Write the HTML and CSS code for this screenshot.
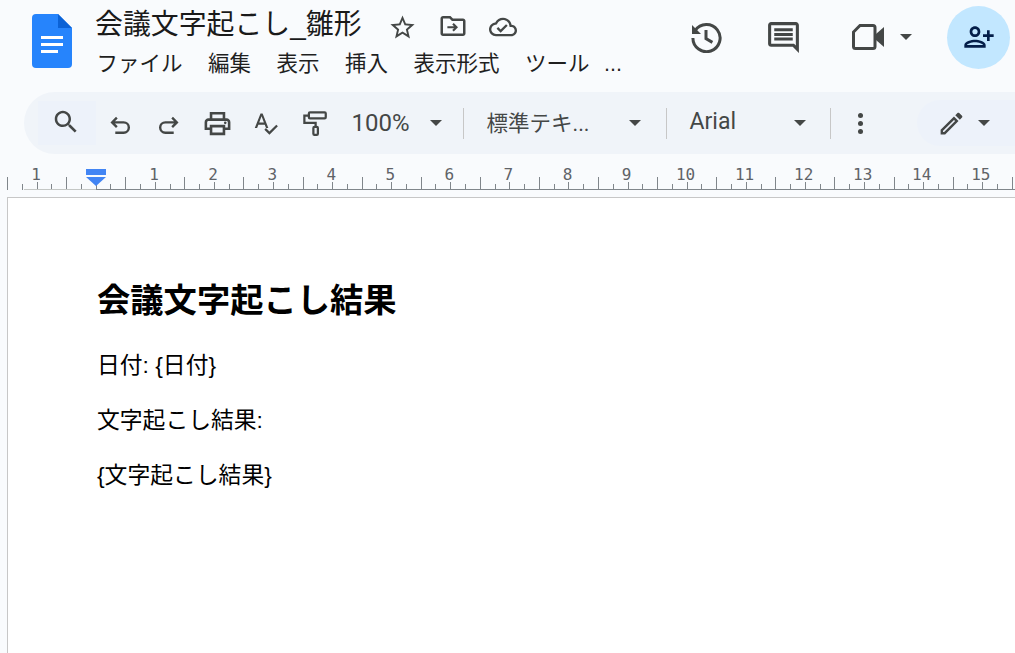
FILE: index.html
```html
<!DOCTYPE html>
<html lang="ja">
<head>
  <meta charset="UTF-8" />
  <title>会議文字起こし_雛形</title>
  <link rel="stylesheet" href="styles.css">
</head>
<body>
  <header class="top-bar">
    <svg class="doc-logo" viewBox="0 0 40 54" width="40" height="54">
      <path d="M4 0H26L40 14V50a4 4 0 0 1-4 4H4a4 4 0 0 1-4-4V4a4 4 0 0 1 4-4z" fill="#2684fc"/>
      <path d="M26 0L40 14H26z" fill="#0b62d6"/>
      <path d="M9 22h22v3H9zM9 29h22v3H9zM9 36h17v3H9z" fill="#fff"/>
    </svg>
    <div class="title-block">
      <div class="title-row">
        <span class="doc-title">会議文字起こし_雛形</span>
        <svg class="star-icon" viewBox="0 0 24 24" width="29" height="29"><path d="M22 9.24l-7.19-.62L12 2 9.19 8.63 2 9.24l5.46 4.73L5.82 21 12 17.27 18.18 21l-1.63-7.03L22 9.24zM12 15.4l-3.76 2.27 1-4.28-3.32-2.88 4.38-.38L12 6.1l1.71 4.04 4.38.38-3.32 2.88 1 4.28L12 15.4z"/></svg>
        <svg class="move-icon" viewBox="0 0 24 24" width="30" height="30"><path d="M20 6h-8l-2-2H4c-1.1 0-2 .9-2 2v12c0 1.1.9 2 2 2h16c1.1 0 2-.9 2-2V8c0-1.1-.9-2-2-2zm0 12H4V6h5.17l2 2H20v10z"/><path d="M12.6 9.6l-1.2 1.2 1.4 1.4H7.5v1.6h5.3l-1.4 1.4 1.2 1.2 3.4-3.4z"/></svg>
        <svg class="cloud-icon" viewBox="0 0 24 24" width="28" height="28"><path d="M19.35 10.04C18.67 6.59 15.64 4 12 4 9.11 4 6.6 5.64 5.35 8.04 2.34 8.36 0 10.91 0 14c0 3.31 2.69 6 6 6h13c2.76 0 5-2.24 5-5 0-2.64-2.05-4.78-4.65-4.96zM19 18H6c-2.21 0-4-1.79-4-4 0-2.05 1.53-3.76 3.56-3.97l1.07-.11.5-.95C8.08 7.14 9.94 6 12 6c2.62 0 4.88 1.86 5.39 4.43l.3 1.5 1.53.11c1.56.1 2.78 1.41 2.78 2.96 0 1.65-1.35 3-3 3zm-9-3.82l-2.09-2.09L6.5 13.5 10 17l6.01-6.01-1.41-1.41z"/></svg>
      </div>
      <nav class="menu-row">
        <span>ファイル</span>
        <span>編集</span>
        <span>表示</span>
        <span>挿入</span>
        <span>表示形式</span>
        <span>ツール</span>
        <span class="menu-more">...</span>
      </nav>
    </div>
    <div class="top-actions">
      <svg class="history-icon" viewBox="0 0 32 32" width="32" height="32">
        <path d="M5.2 9.5A13.6 13.6 0 1 1 2.9 17" fill="none" stroke="#444746" stroke-width="3"/>
        <path d="M2 4l9 9H2z" fill="#444746"/>
        <path d="M16 9v8.6l6.4 3.8" fill="none" stroke="#444746" stroke-width="3"/>
      </svg>
      <svg class="comment-icon" viewBox="0 0 24 24" width="37" height="37"><path d="M21.99 4c0-1.1-.89-2-1.99-2H4c-1.1 0-2 .9-2 2v12c0 1.1.9 2 2 2h14l4 4-.01-18zM20 4v13.17L18.83 16H4V4h16zM6 12h12v2H6zm0-3h12v2H6zm0-3h12v2H6z"/></svg>
      <svg class="video-icon" viewBox="0 0 33 26" width="33" height="26">
        <path d="M8 1.5H21a2 2 0 0 1 2 2V22.500a2 2 0 0 1-2 2H3.500a2 2 0 0 1-2-2V8z" fill="none" stroke="#444746" stroke-width="3"/>
        <path d="M24 10l8-7V23l-8-7z" fill="#444746"/>
      </svg>
      <span class="caret video-caret"></span>
      <div class="share-btn">
        <svg viewBox="0 0 24 24" width="32" height="32"><path transform="translate(24 0) scale(-1 1)" d="M15 12c2.210 0 4-1.790 4-4s-1.790-4-4-4-4 1.790-4 4 1.790 4 4 4zm0-6c1.100 0 2 .9 2 2s-.9 2-2 2-2-.9-2-2 .9-2 2-2zm0 8c-2.670 0-8 1.340-8 4v2h16v-2c0-2.660-5.330-4-8-4zm-6 4c.22-.72 3.310-2 6-2 2.700 0 5.800 1.290 6 2H9zm-3-3v-3h3v-2H6V7H4v3H1v2h3v3h2z"/></svg>
      </div>
    </div>
  </header>

  <div class="toolbar">
    <div class="search-btn">
      <svg viewBox="0 0 24 24" width="30" height="30"><path d="M15.500 14h-.79l-.28-.27C15.410 12.590 16 11.110 16 9.500 16 5.910 13.090 3 9.500 3S3 5.910 3 9.500 5.910 16 9.500 16c1.610 0 3.090-.59 4.230-1.570l.27.28v.79l5 4.990L20.490 19l-4.990-5zm-6 0C7.010 14 5 11.990 5 9.500S7.010 5 9.500 5 14 7.010 14 9.500 11.990 14 9.500 14z"/></svg>
    </div>
    <div class="tool-btn">
      <svg class="nudge-down" viewBox="0 0 24 24" width="25" height="25"><path d="M8.500 4.500L4 9l4.500 4.500M4.500 9H15a5 5 0 0 1 0 10H7" fill="none" stroke="#444746" stroke-width="2.300"/></svg>
    </div>
    <div class="tool-btn">
      <svg class="nudge-down" viewBox="0 0 24 24" width="25" height="25"><path d="M15.500 4.500L20 9l-4.500 4.500M19.500 9H9a5 5 0 0 0 0 10h8" fill="none" stroke="#444746" stroke-width="2.300"/></svg>
    </div>
    <div class="tool-btn">
      <svg viewBox="0 0 24 24" width="31" height="31"><path d="M19 8h-1V3H6v5H5c-1.660 0-3 1.340-3 3v6h4v4h12v-4h4v-6c0-1.660-1.340-3-3-3zM8 5h8v3H8V5zm8 14H8v-4h8v4zm2-4v-2H6v2H4v-4c0-.55.45-1 1-1h14c.55 0 1 .45 1 1v4h-2z"/><circle cx="18" cy="11.500" r="1"/></svg>
    </div>
    <div class="tool-btn">
      <svg viewBox="0 0 24 24" width="27" height="27"><path d="M12.450 16h2.090L9.430 3H7.570L2.460 16h2.090l1.120-3h5.640l1.140 3zm-6.020-5L8.500 5.480 10.570 11H6.430z"/><path d="M23 14.500l-7.500 7.500-4.500-4.500 1.400-1.400 3.100 3.100 6.100-6.100z"/></svg>
    </div>
    <div class="tool-btn">
      <svg class="paint-icon" viewBox="0 0 24 24" width="27" height="27">
        <rect x="7" y="2" width="15" height="5.500" rx="1"/>
        <path d="M7 5H3v6.500h10V15"/>
        <rect x="11" y="15" width="4" height="7" rx="1"/>
      </svg>
    </div>
    <div class="select-box zoom-select"><span>100%</span><span class="caret"></span></div>
    <span class="tool-divider"></span>
    <div class="select-box style-select"><span class="select-label">標準テキ...</span><span class="caret"></span></div>
    <span class="tool-divider"></span>
    <div class="select-box font-select"><span class="select-label">Arial</span><span class="caret"></span></div>
    <span class="tool-divider"></span>
    <div class="more-btn"><i></i><i></i><i></i></div>
    <div class="mode-btn">
      <svg viewBox="0 0 24 24" width="29" height="29"><path d="M3 17.250V21h3.750L17.810 9.940l-3.750-3.750L3 17.250zM5.920 19H5v-.92l9.060-9.060.92.92L5.920 19zM20.710 7.040c.39-.39.39-1.020 0-1.410l-2.340-2.340c-.2-.2-.45-.29-.71-.29s-.51.1-.7.290l-1.830 1.830 3.750 3.750 1.830-1.830z"/></svg>
      <span class="caret"></span>
    </div>
  </div>

  <div class="ruler">
    <div class="ruler-track">
      <div class="ruler-numbers">
        <span>1</span><span></span><span>1</span><span>2</span><span>3</span><span>4</span><span>5</span><span>6</span><span>7</span><span>8</span><span>9</span><span>10</span><span>11</span><span>12</span><span>13</span><span>14</span><span>15</span>
      </div>
    </div>
    <div class="indent-marker"><b></b><i></i></div>
  </div>

  <main class="page">
    <h1>会議文字起こし結果</h1>
    <p>日付: {日付}</p>
    <p>文字起こし結果:</p>
    <p>{文字起こし結果}</p>
  </main>
</body>
</html>
```
FILE: styles.css
```css
html, body {
  height: 100%;
}

body {
  margin: 0;
  background: #f9fbfd;
  color: #1f1f1f;
  font-family: "Liberation Sans", "Noto Sans CJK JP", sans-serif;
  display: flex;
  flex-direction: column;
  overflow: hidden;
}

svg {
  display: block;
  fill: #444746;
  flex-shrink: 0;
}

.caret {
  display: block;
  width: 0;
  height: 0;
  border-left: 6px solid transparent;
  border-right: 6px solid transparent;
  border-top: 6px solid #444746;
  flex-shrink: 0;
}

/* top bar */
.top-bar {
  height: 92px;
  display: flex;
  flex-shrink: 0;
  padding-left: 32px;
}

.doc-logo {
  margin: 14px 23px 0 0;
}

.title-row {
  height: 48px;
  display: flex;
  align-items: center;
  padding-top: 2px;
  box-sizing: border-box;
}

.doc-title {
  font-size: 27.900px;
  line-height: 36px;
  color: #1a1a1a;
  width: 292.500px;
  white-space: nowrap;
}

.star-icon {
  margin: 4px 21.500px 0 0;
}

.move-icon {
  margin: 2px 21px 0 0;
}

.cloud-icon {
  margin-top: 4px;
}

.menu-row {
  display: flex;
  gap: 25.500px;
  font-size: 21.500px;
  line-height: 32px;
  margin-left: 1.500px;
  white-space: nowrap;
}

.menu-more {
  margin-left: -11px;
}

.top-actions {
  margin-left: auto;
  display: flex;
  align-items: center;
  height: 74px;
  padding-right: 5px;
}

.history-icon {
  margin-right: 43px;
}

.comment-icon {
  margin-right: 50px;
}

.video-icon {
  margin-right: 15px;
}

.video-caret {
  margin-right: 35px;
}

.share-btn {
  width: 63px;
  height: 63px;
  border-radius: 50%;
  background: #c2e7ff;
  display: flex;
  align-items: center;
  justify-content: center;
}

.share-btn svg {
  fill: #041e49;
}

/* toolbar */
.toolbar {
  height: 62px;
  margin-left: 24px;
  flex-shrink: 0;
  background: #f0f4f9;
  border-radius: 31px 0 0 31px;
  padding-left: 14px;
  display: flex;
  align-items: center;
  overflow: hidden;
  color: #444746;
  font-size: 23px;
}

.search-btn {
  width: 58px;
  height: 44px;
  background: #edf2fa;
  display: flex;
  align-items: center;
  justify-content: center;
}

.search-btn svg {
  margin: -2px 2px 0 0;
}

.tool-btn {
  width: 48.5px;
  display: flex;
  justify-content: center;
}

.nudge-down {
  margin-top: 4px;
}

.paint-icon {
  fill: none;
  stroke: #444746;
  stroke-width: 2;
}

.select-box {
  display: flex;
  align-items: center;
  justify-content: space-between;
  box-sizing: border-box;
  white-space: nowrap;
}

.select-label {
  margin-top: -4px;
}

.zoom-select {
  width: 124px;
  padding: 0 21px 0 13px;
  font-size: 24px;
  font-family: Roboto, "Noto Sans CJK JP", sans-serif;
}

.style-select {
  width: 202px;
  padding: 0 25px 0 23px;
  font-size: 21.500px;
  font-family: Roboto, "Noto Sans CJK JP", sans-serif;
}

.font-select {
  width: 163px;
  padding: 0 24px 0 23px;
  font-family: Roboto, sans-serif;
}

.tool-divider {
  width: 1px;
  height: 31px;
  background: #c7c7c7;
  flex-shrink: 0;
}

.more-btn {
  width: 59px;
  display: flex;
  flex-direction: column;
  align-items: center;
  gap: 3px;
}

.more-btn i {
  width: 5px;
  height: 5px;
  border-radius: 50%;
  background: #444746;
}

.mode-btn {
  margin-left: 27px;
  width: 98px;
  height: 46px;
  border-radius: 23px 0 0 23px;
  background: #edf2fa;
  display: flex;
  align-items: center;
  padding-left: 20px;
  gap: 12px;
  box-sizing: border-box;
}

/* ruler */
.ruler {
  height: 43px;
  position: relative;
  flex-shrink: 0;
  overflow: hidden;
}

.ruler-track {
  margin-left: 6.5px;
  height: 36px;
  background-repeat: no-repeat;
  background-position: left bottom;
  background-image:
    linear-gradient(90deg, transparent 17.500px, #c4c7c5 17.500px, #c4c7c5 89.500px, #80868b 89.500px),
    repeating-linear-gradient(90deg, #80868b 0, #80868b 1px, transparent 1px, transparent 59.100px),
    repeating-linear-gradient(90deg, transparent 0, transparent 29.550px, #80868b 29.550px, #80868b 30.550px, transparent 30.550px, transparent 59.100px),
    repeating-linear-gradient(90deg, transparent 0, transparent 14.775px, #80868b 14.775px, #80868b 15.775px, transparent 15.775px, transparent 44.325px, #80868b 44.325px, #80868b 45.325px, transparent 45.325px, transparent 59.100px);
  background-size: 100% 1px, 100% 13px, 100% 8px, 100% 6px;
}

.ruler-numbers {
  display: flex;
  padding-top: 11px;
  font-family: "DejaVu Sans Mono", monospace;
  font-size: 16px;
  line-height: 20px;
  color: #5f6368;
  overflow: hidden;
}

.ruler-numbers span {
  flex: 0 0 59.050px;
  text-align: center;
}

.indent-marker {
  position: absolute;
  left: 86px;
  top: 15px;
  width: 20px;
}

.indent-marker b {
  display: block;
  height: 6px;
  background: #4285f4;
  margin-bottom: 2px;
}

.indent-marker i {
  display: block;
  width: 0;
  height: 0;
  border-left: 10px solid transparent;
  border-right: 10px solid transparent;
  border-top: 9px solid #4285f4;
}

/* page */
.page {
  flex: 1;
  margin-left: 7px;
  padding: 83px 0 0 89px;
  background: #fff;
  border-left: 1px solid #c7c7c7;
  border-top: 1px solid #c7c7c7;
  color: #000;
}

.page h1 {
  margin: 0 0 29px;
  font-size: 33.300px;
  line-height: 40px;
  font-weight: bold;
}

.page p {
  margin: 0 0 24px;
  font-size: 22.800px;
  line-height: 31px;
}
```
